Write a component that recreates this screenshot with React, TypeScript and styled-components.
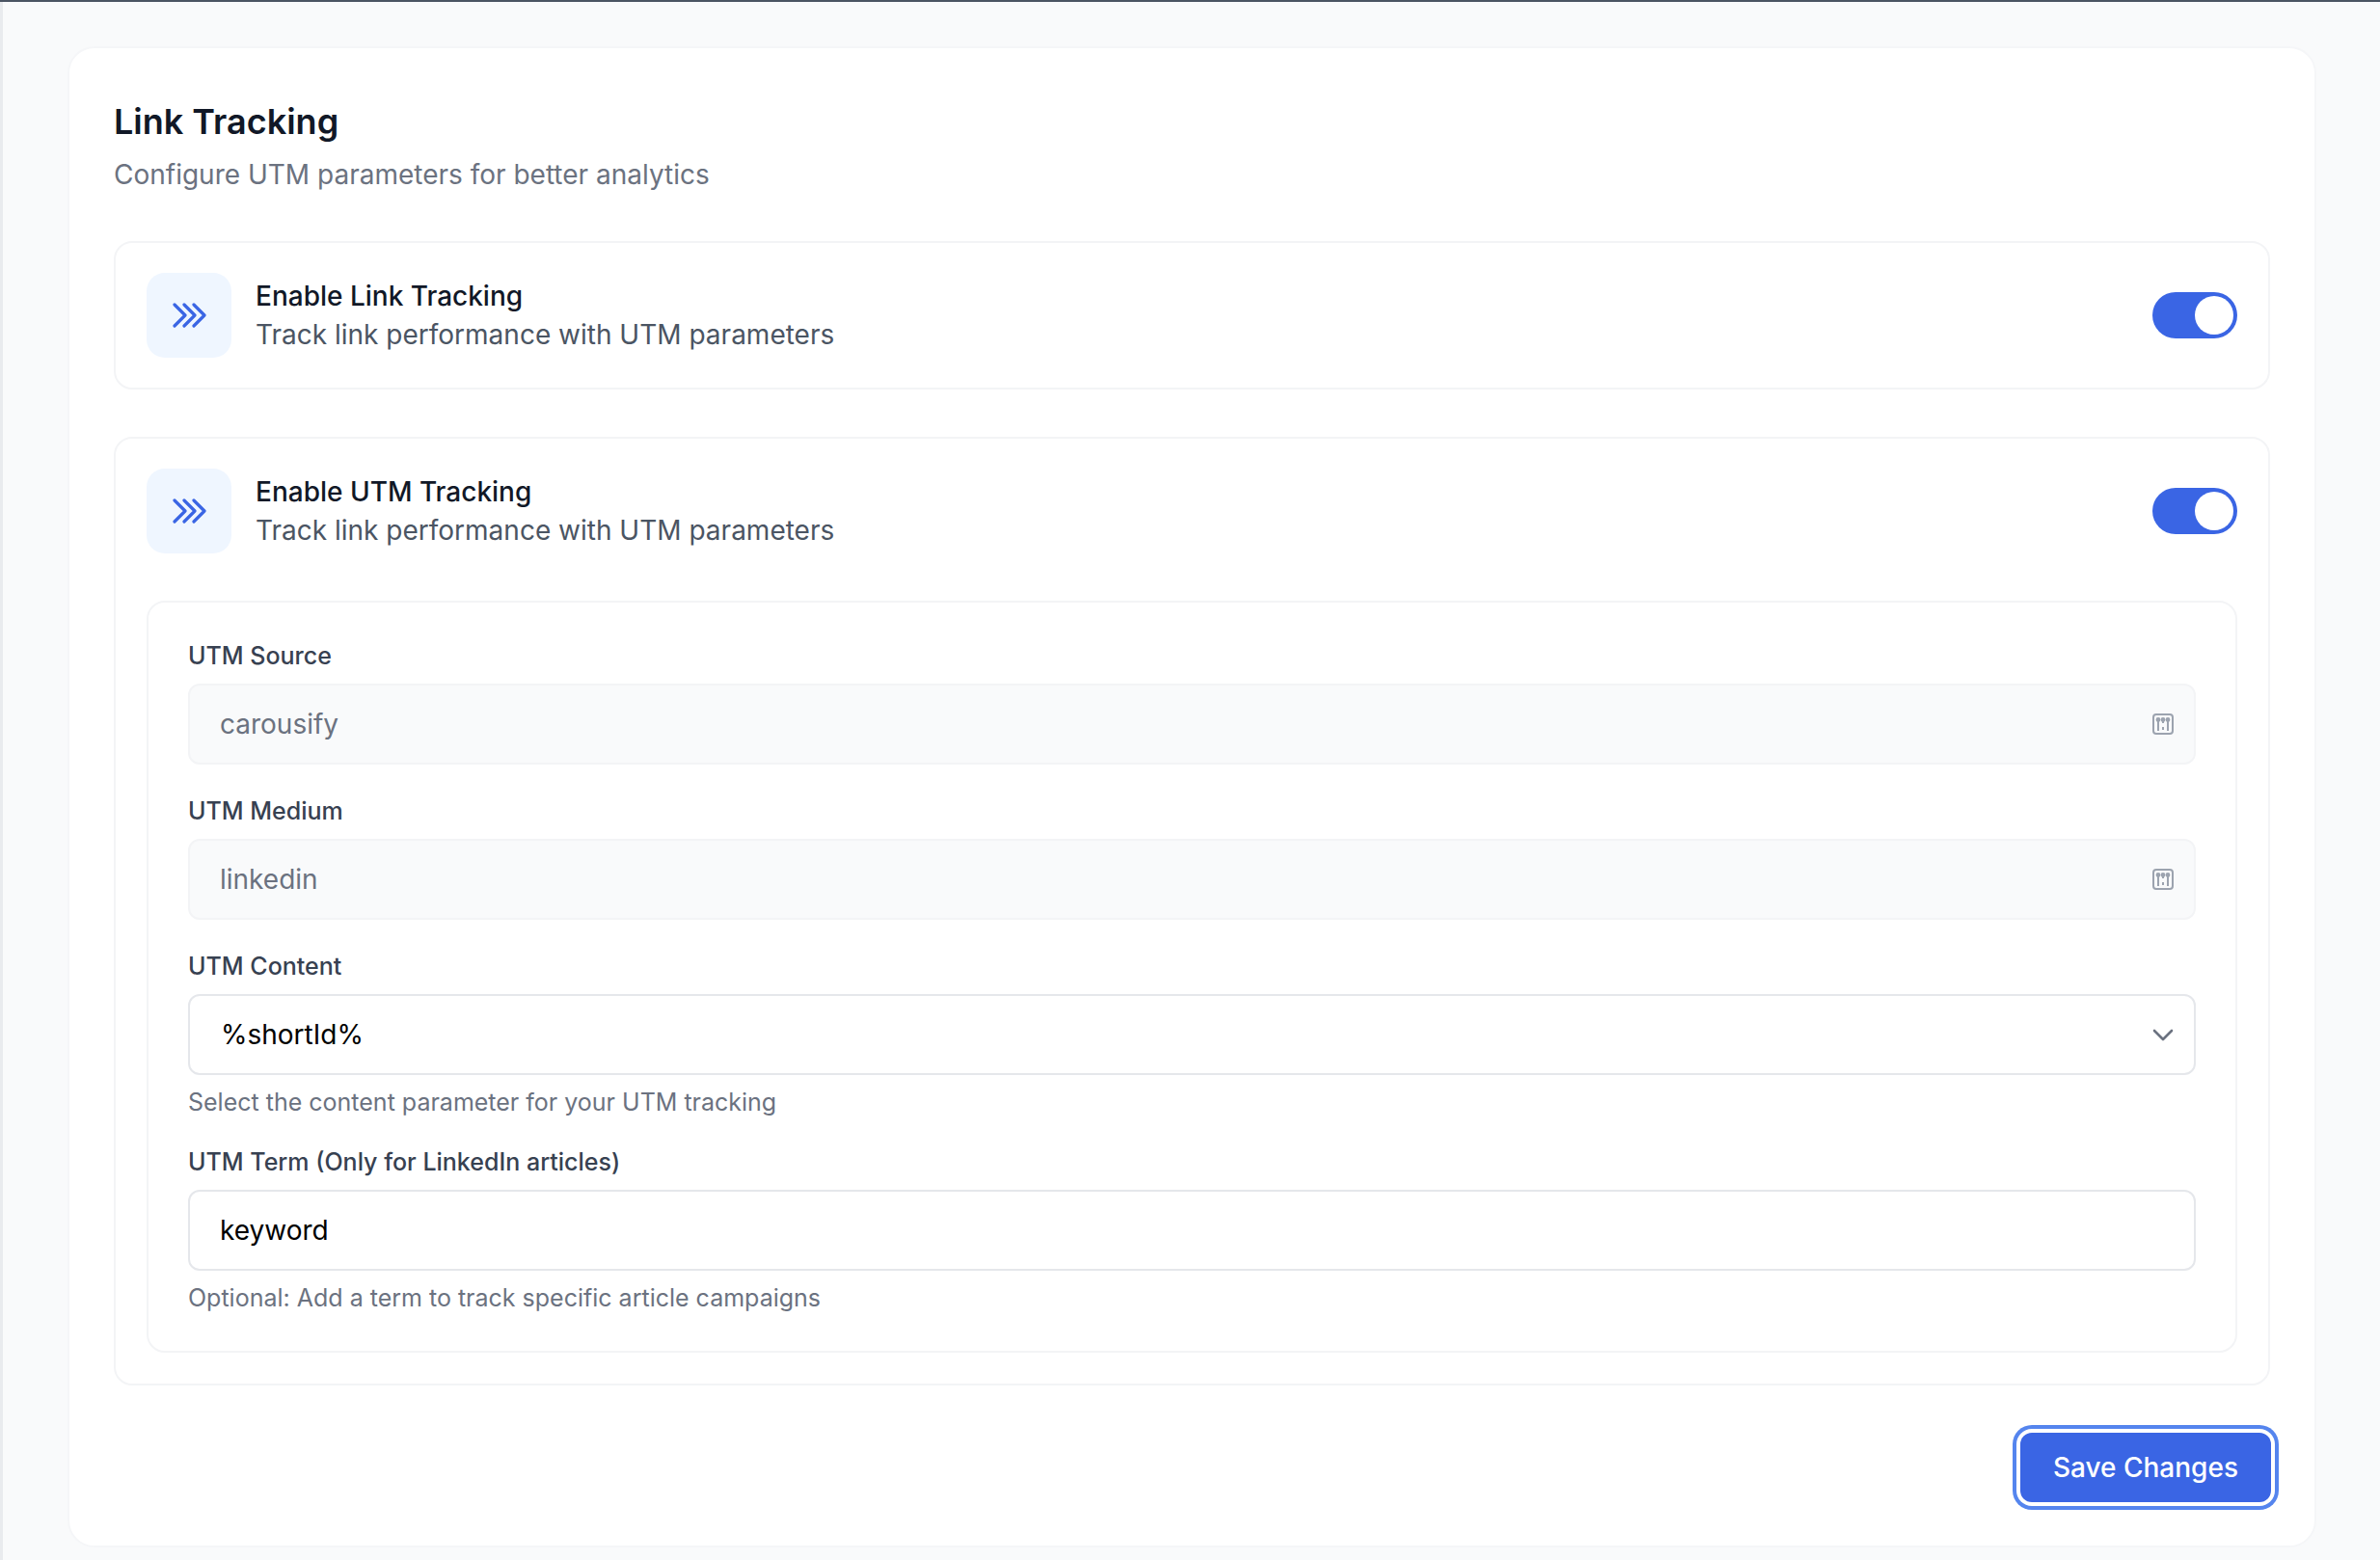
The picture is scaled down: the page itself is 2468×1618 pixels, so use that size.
import styled, { createGlobalStyle } from 'styled-components'

const GlobalStyle = createGlobalStyle`
  html, body {
    margin: 0;
    padding: 0;
    height: 100%;
    overflow: hidden;
    background: #f9fafb;
  }
  * {
    box-sizing: border-box;
  }
  body {
    font-family: Inter, "Liberation Sans", sans-serif;
  }
`

const TopEdge = styled.div`
  height: 2px;
  background: #4b5563;
  box-shadow: 0 2px 8px rgba(75, 85, 99, 0.35);
`

const Page = styled.div`
  height: 1616px;
  padding: 46px 66px 0 67px;
  background: #f9fafb;
  border-left: 3px solid #e9ebee;
`

const Card = styled.section`
  display: flex;
  flex-direction: column;
  height: 1557px;
  padding: 54px 46px 46px;
  background: #fff;
  border: 2px solid #f5f6f8;
  border-radius: 28px;
`

const Title = styled.h1`
  margin: 0 0 13px;
  font-size: 36px;
  line-height: 44px;
  font-weight: 600;
  color: #111827;
`

const Subtitle = styled.p`
  margin: 0 0 49px;
  font-size: 28px;
  line-height: 40px;
  color: #6b7280;
`

const Section = styled.div<{ $stacked?: boolean }>`
  display: flex;
  flex-direction: column;
  gap: 49px;
  margin-bottom: 49px;
  padding: 31px 32px ${props => (props.$stacked ? '32px' : '31px')};
  border: 2px solid #f3f4f6;
  border-radius: 19px;
`

const RowHead = styled.div`
  display: flex;
  align-items: center;
  gap: 25px;
`

const IconBox = styled.div`
  display: flex;
  align-items: center;
  justify-content: center;
  flex: none;
  width: 88px;
  height: 88px;
  background: #eff6ff;
  border-radius: 19px;
`

const RowText = styled.div`
  flex: 1;
`

const RowTitle = styled.div`
  font-size: 28px;
  line-height: 40px;
  font-weight: 500;
  color: #111827;
`

const RowDesc = styled.div`
  font-size: 28px;
  line-height: 40px;
  color: #4b5563;
`

const Toggle = styled.button`
  display: flex;
  justify-content: flex-end;
  flex: none;
  width: 88px;
  height: 48px;
  padding: 4px;
  background: #3a65e4;
  border: 0;
  border-radius: 24px;
`

const Knob = styled.span`
  display: block;
  width: 40px;
  height: 40px;
  background: #fff;
  border-radius: 50%;
`

const Panel = styled.div`
  display: flex;
  flex-direction: column;
  gap: 32px;
  padding: 39px 41px 41px;
  border: 2px solid #f3f4f6;
  border-radius: 19px;
`

const Field = styled.div`
  display: flex;
  flex-direction: column;
`

const Label = styled.label`
  margin-bottom: 13px;
  font-size: 25px;
  line-height: 32px;
  font-weight: 500;
  color: #374151;
`

const Shell = styled.div<{ $locked?: boolean }>`
  display: flex;
  align-items: center;
  height: 84px;
  padding: 0 14px 0 31px;
  background: ${props => (props.$locked ? '#f9fafb' : '#fff')};
  border: 2px solid ${props => (props.$locked ? '#f3f4f6' : '#e5e7eb')};
  border-radius: 12px;
`

const TextInput = styled.input<{ $locked?: boolean }>`
  flex: 1;
  min-width: 0;
  padding: 0;
  font: inherit;
  font-size: 28px;
  color: ${props => (props.$locked ? '#6b7280' : '#000')};
  background: transparent;
  border: 0;
  outline: 0;
`

const Select = styled.select`
  flex: 1;
  min-width: 0;
  padding: 0;
  margin-left: 1px;
  font: inherit;
  font-size: 28px;
  color: #000;
  background: transparent;
  border: 0;
  outline: 0;
  appearance: none;
`

const Adornment = styled.span`
  display: flex;
  align-items: center;
  justify-content: center;
  flex: none;
  width: 36px;
`

const Hint = styled.p`
  margin: 14px 0 0;
  font-size: 25px;
  line-height: 28px;
  color: #6b7280;
`

const Footer = styled.div`
  display: flex;
  justify-content: flex-end;
`

const SaveButton = styled.button`
  height: 72px;
  margin-right: -1px;
  padding: 0 34px;
  font: inherit;
  font-size: 28px;
  font-weight: 500;
  color: #fff;
  background: #3a65e4;
  border: 0;
  border-radius: 12px;
  box-shadow: 0 0 0 4px #fff, 0 0 0 8px #5585ee;
`

function ChevronsIcon() {
  return (
    <svg width="36" height="26" viewBox="0 0 36 26" fill="none" stroke="#3a65e4" strokeWidth="3.2" strokeLinecap="round" strokeLinejoin="round">
      <path d="M3 2l11 11L3 24" />
      <path d="M13 2l11 11-11 11" />
      <path d="M23 2l11 11-11 11" />
    </svg>
  )
}

function LockedIcon() {
  return (
    <svg width="24" height="24" viewBox="0 0 24 24" fill="none" stroke="#9ca3af" strokeWidth="2">
      <rect x="2" y="2" width="20" height="20" rx="3" />
      <path d="M7 8v11M12 8v3M12 15v3M17 8v11" />
      <circle cx="7" cy="7.5" r="1.4" fill="#9ca3af" />
      <circle cx="12" cy="7.5" r="1.4" fill="#9ca3af" />
      <circle cx="17" cy="7.5" r="1.4" fill="#9ca3af" />
    </svg>
  )
}

function ChevronIcon() {
  return (
    <svg width="22" height="14" viewBox="0 0 22 14" fill="none" stroke="#6b7280" strokeWidth="2.6" strokeLinecap="round" strokeLinejoin="round">
      <path d="M2 3l9 9 9-9" />
    </svg>
  )
}

function TrackingHead({ title }: { title: string }) {
  return (
    <RowHead>
      <IconBox>
        <ChevronsIcon />
      </IconBox>
      <RowText>
        <RowTitle>{title}</RowTitle>
        <RowDesc>Track link performance with UTM parameters</RowDesc>
      </RowText>
      <Toggle type="button" role="switch" aria-checked="true" aria-label={title}>
        <Knob />
      </Toggle>
    </RowHead>
  )
}

function LockedField({ label, value }: { label: string; value: string }) {
  return (
    <Field>
      <Label>{label}</Label>
      <Shell $locked>
        <TextInput $locked value={value} readOnly />
        <Adornment>
          <LockedIcon />
        </Adornment>
      </Shell>
    </Field>
  )
}

export default function App() {
  return (
    <>
      <GlobalStyle />
      <TopEdge />
      <Page>
        <Card>
          <Title>Link Tracking</Title>
          <Subtitle>Configure UTM parameters for better analytics</Subtitle>

          <Section>
            <TrackingHead title="Enable Link Tracking" />
          </Section>

          <Section $stacked>
            <TrackingHead title="Enable UTM Tracking" />
            <Panel>
              <LockedField label="UTM Source" value="carousify" />
              <LockedField label="UTM Medium" value="linkedin" />
              <Field>
                <Label>UTM Content</Label>
                <Shell>
                  <Select defaultValue="%shortId%">
                    <option>%shortId%</option>
                  </Select>
                  <Adornment>
                    <ChevronIcon />
                  </Adornment>
                </Shell>
                <Hint>Select the content parameter for your UTM tracking</Hint>
              </Field>
              <Field>
                <Label>UTM Term (Only for LinkedIn articles)</Label>
                <Shell>
                  <TextInput value="keyword" readOnly />
                </Shell>
                <Hint>Optional: Add a term to track specific article campaigns</Hint>
              </Field>
            </Panel>
          </Section>

          <Footer>
            <SaveButton type="button">Save Changes</SaveButton>
          </Footer>
        </Card>
      </Page>
    </>
  )
}
